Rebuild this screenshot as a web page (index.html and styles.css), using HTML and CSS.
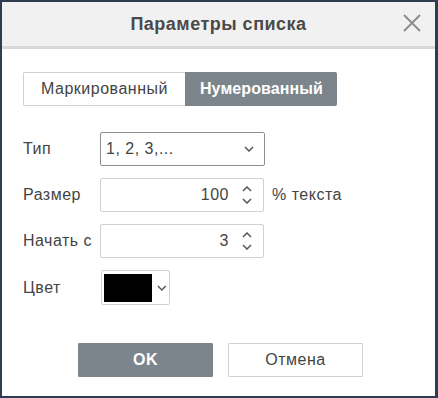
FILE: index.html
```html
<!DOCTYPE html>
<html lang="ru">
<head>
    <meta charset="UTF-8">
    <meta name="viewport" content="width=device-width, initial-scale=1.0">
    <title>Параметры списка</title>
    <link rel="stylesheet" href="styles.css">
</head>
<body>
    <div class="dialog">
        <div class="header">
            <span class="title">Параметры списка</span>
            <span class="close">
                <svg width="18" height="18" viewBox="0 0 18 18"><path d="M1 1 L17 17 M17 1 L1 17" stroke="#8a8a8a" stroke-width="1.8" fill="none"/></svg>
            </span>
        </div>
        <div class="content">
            <div class="tabs">
                <div class="tab">Маркированный</div>
                <div class="tab active">Нумерованный</div>
            </div>

            <div class="row first">
                <div class="label">Тип</div>
                <div class="select">
                    <span>1, 2, 3,...</span>
                    <svg class="chev" width="10" height="6" viewBox="0 0 10 6"><path d="M1 1 L5 5 L9 1" stroke="#555" stroke-width="1.5" fill="none"/></svg>
                </div>
            </div>

            <div class="row">
                <div class="label">Размер</div>
                <div class="spin">
                    <span class="value">100</span>
                    <span class="arrows">
                        <svg width="10" height="6" viewBox="0 0 10 6"><path d="M1 5 L5 1 L9 5" stroke="#555" stroke-width="1.5" fill="none"/></svg>
                        <svg width="10" height="6" viewBox="0 0 10 6"><path d="M1 1 L5 5 L9 1" stroke="#555" stroke-width="1.5" fill="none"/></svg>
                    </span>
                </div>
                <div class="unit">% текста</div>
            </div>

            <div class="row">
                <div class="label">Начать с</div>
                <div class="spin">
                    <span class="value">3</span>
                    <span class="arrows">
                        <svg width="10" height="6" viewBox="0 0 10 6"><path d="M1 5 L5 1 L9 5" stroke="#555" stroke-width="1.5" fill="none"/></svg>
                        <svg width="10" height="6" viewBox="0 0 10 6"><path d="M1 1 L5 5 L9 1" stroke="#555" stroke-width="1.5" fill="none"/></svg>
                    </span>
                </div>
            </div>

            <div class="row">
                <div class="label">Цвет</div>
                <div class="color">
                    <span class="swatch"></span>
                    <svg class="chev" width="10" height="6" viewBox="0 0 10 6"><path d="M1 1 L5 5 L9 1" stroke="#555" stroke-width="1.5" fill="none"/></svg>
                </div>
            </div>
        </div>
        <div class="footer">
            <div class="btn primary">OK</div>
            <div class="btn">Отмена</div>
        </div>
    </div>
</body>
</html>
```

FILE: styles.css
```css
html, body
{
    margin: 0;
    padding: 0;
}
body
{
    font-family: "Liberation Sans", Arial, sans-serif;
    color: #444;
    background-color: #fff;
    letter-spacing: 0.5px;
}
.dialog
{
    width: 438px;
    height: 398px;
    box-sizing: border-box;
    border-style: solid;
    border-color: #2e3e50;
    border-width: 2px 3px 2px 2px;
    display: flex;
    flex-direction: column;
    background-color: #fff;
}
.header
{
    height: 44px;
    background-color: #f1f1f1;
    border-bottom: 3px solid #d8d8d8;
    display: flex;
    align-items: center;
    justify-content: center;
    position: relative;
}
.title
{
    font-size: 18px;
    font-weight: bold;
    color: #4a4a4a;
    margin-top: 1px;
}
.close
{
    position: absolute;
    right: 14px;
    top: 12px;
    display: flex;
}
.content
{
    padding: 23px 0 0 21px;
}
.tabs
{
    display: flex;
    height: 34px;
}
.tab
{
    width: 162px;
    box-sizing: border-box;
    border: 1px solid #d0d0d0;
    border-right: none;
    border-radius: 2px 0 0 2px;
    display: flex;
    align-items: center;
    justify-content: center;
    font-size: 16px;
    color: #444;
}
.tab.active
{
    width: 152px;
    background-color: #7d858c;
    border-color: #7d858c;
    border-radius: 0 2px 2px 0;
    color: #fff;
    font-weight: bold;
    letter-spacing: 0.1px;
}
.row
{
    display: flex;
    align-items: center;
    margin-top: 12px;
}
.row.first
{
    margin-top: 26px;
}
.label
{
    width: 77px;
    font-size: 16px;
    color: #444;
}
.select, .spin, .color
{
    box-sizing: border-box;
    height: 34px;
    border: 1px solid #d0d0d0;
    border-radius: 2px;
    display: flex;
    align-items: center;
    font-size: 16px;
    color: #444;
}
.select
{
    width: 165px;
    border-color: #8f8f8f;
    padding: 0 10px 0 5px;
    justify-content: space-between;
}
.spin
{
    width: 164px;
    justify-content: flex-end;
    padding-right: 11px;
}
.spin .value
{
    margin-right: 13px;
}
.arrows
{
    display: flex;
    flex-direction: column;
    gap: 6px;
}
.arrows svg
{
    display: block;
}
.unit
{
    margin-left: 8px;
    font-size: 16px;
    color: #444;
}
.color
{
    width: 69px;
    height: 35px;
    padding: 2px;
    margin-left: 1px;
}
.swatch
{
    width: 50px;
    height: 28px;
    background-color: #000;
}
.color .chev
{
    margin-left: 5px;
}
.footer
{
    display: flex;
    justify-content: center;
    gap: 15px;
    margin-top: 38px;
    padding-left: 4px;
}
.btn
{
    width: 135px;
    height: 34px;
    box-sizing: border-box;
    border: 1px solid #d0d0d0;
    border-radius: 1px;
    display: flex;
    align-items: center;
    justify-content: center;
    font-size: 16px;
    color: #444;
}
.btn.primary
{
    background-color: #7d858c;
    border-color: #7d858c;
    color: #fff;
    font-weight: bold;
}
```
